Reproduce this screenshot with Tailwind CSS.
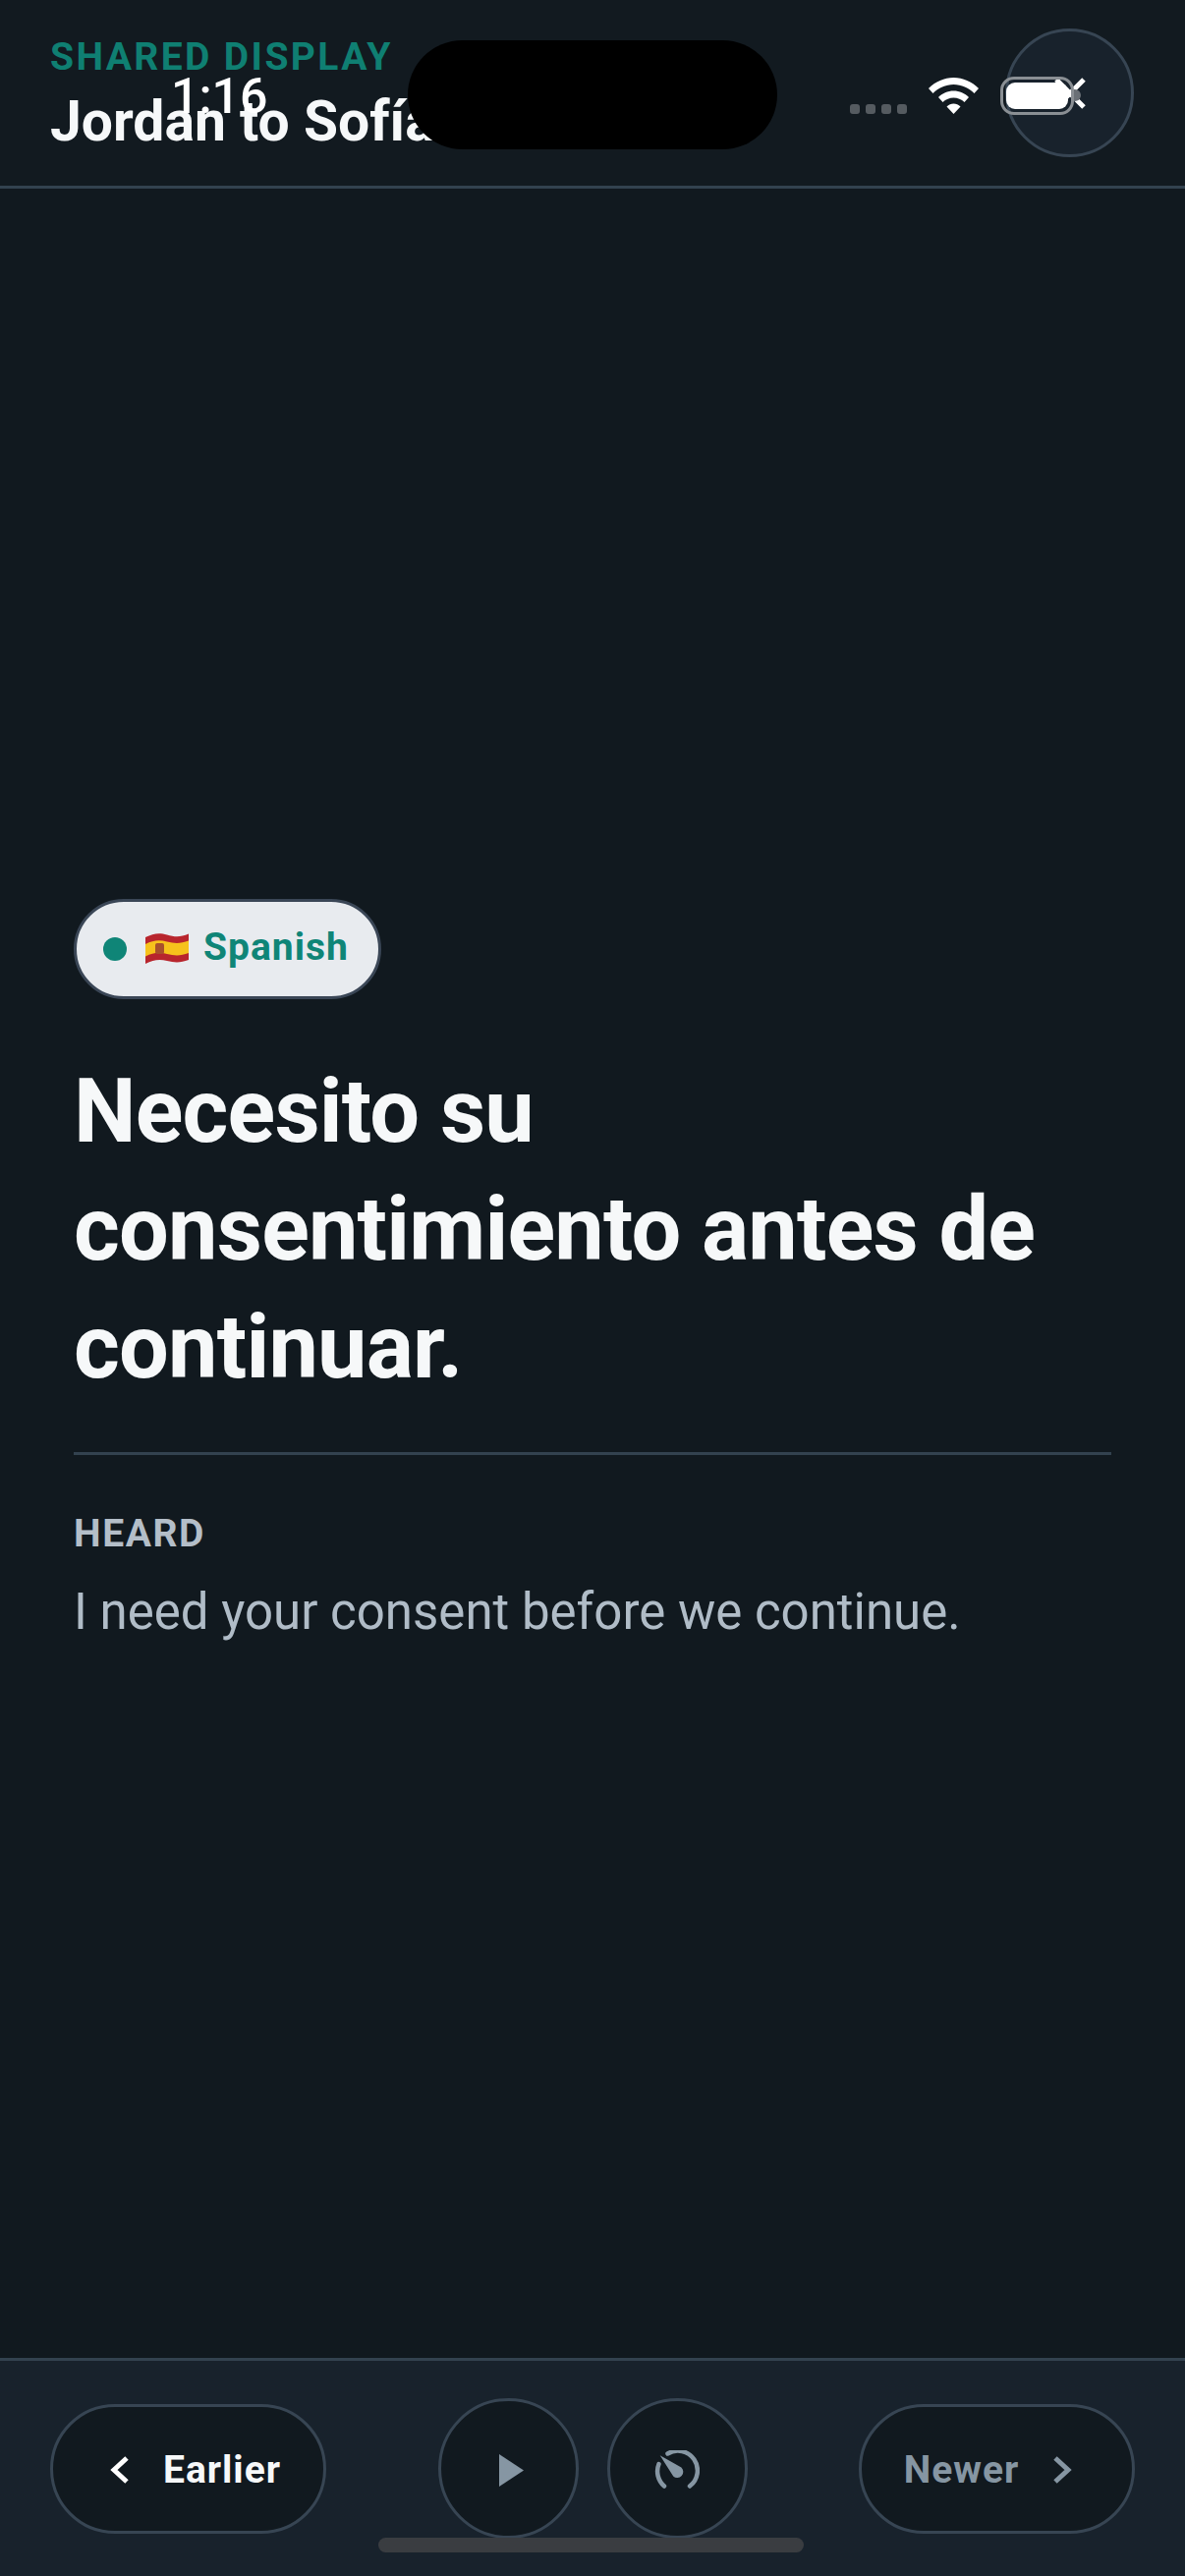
<!DOCTYPE html>
<html lang="en">
<head>
<meta charset="utf-8">
<title>Shared display</title>
<script src="https://cdn.jsdelivr.net/npm/@tailwindcss/browser@4"></script>
</head>
<body class="m-0 bg-[#11191f]">
<div class="relative w-[1206px] h-[2622px] overflow-hidden flex flex-col bg-[#11191f] font-[Roboto,sans-serif]">

  <!-- Header -->
  <header class="h-[192px] shrink-0 border-b-[3px] border-[#33424f] bg-[#121a20] pl-[51px] pr-[52px] flex items-start justify-between">
    <div class="pt-[33px]">
      <p class="text-[39px] leading-[50px] font-bold tracking-[2.4px] text-[#0f7f72]">SHARED DISPLAY</p>
      <h1 class="mt-[5px] text-[57px] leading-[72px] font-bold text-[#f6f8f9]">Jordan to Sofía</h1>
    </div>
    <button class="mt-[29px] w-[131px] h-[131px] rounded-full border-[3px] border-[#374553] bg-[#18222c] flex items-center justify-center">
      <svg class="w-[32px] h-[32px]" viewBox="0 0 32 32" fill="none" stroke="#ffffff" stroke-width="5"><path d="M2 2 30 30M30 2 2 30"/></svg>
    </button>
  </header>

  <!-- Main -->
  <main class="flex-1 flex flex-col justify-center px-[75px] pb-[2px]">
    <div class="self-start h-[102px] rounded-full border-[3px] border-[#3a4656] bg-[#e8ebef] pl-[27px] pr-[30px] flex items-center">
      <span class="w-[24px] h-[24px] rounded-full bg-[#0f8577]"></span>
      <svg class="ml-[19px] w-[44px] h-[34px]" viewBox="0 0 44 34">
        <path d="M0 5C8 1 14 0 22 2.500 30 5 36 5 44 1.500V28C36 31 30 31 22 29 14 27 8 28 0 32Z" fill="#b8252d"/>
        <path d="M0 12C8 8 14 7.500 22 9.500 30 11.500 36 11.500 44 8.500V21C36 24 30 24 22 22 14 20 8 20.500 0 24.500Z" fill="#f6c21c"/>
        <rect x="10" y="11" width="9" height="11" rx="2" fill="#a8502c"/>
      </svg>
      <span class="ml-[15px] -mt-[4px] text-[39px] leading-[50px] font-bold tracking-[1px] text-[#0f8577]">Spanish</span>
    </div>
    <h2 class="mt-[55px] text-[90px] leading-[120px] font-bold tracking-[-0.8px] text-[#f6f8f9]">Necesito su consentimiento antes de continuar.</h2>
    <div class="mt-[46px] border-t-[3px] border-[#33424f] pt-[55px]">
      <p class="text-[39px] leading-[50px] font-bold tracking-[1.6px] text-[#b4bec8]">HEARD</p>
      <p class="mt-[21px] text-[51px] leading-[68px] text-[#b0bcc7]">I need your consent before we continue.</p>
    </div>
  </main>

  <!-- Footer -->
  <footer class="h-[222px] shrink-0 border-t-[3px] border-[#33424f] bg-[#18222c] px-[51px] flex items-center justify-between">
    <button class="w-[281px] h-[132px] rounded-full border-[3px] border-[#374553] bg-[#11191f] pl-[3px] pt-[3px] flex items-center justify-center gap-[20px]">
      <svg class="w-[46px] h-[28px]" viewBox="0 0 46 28" fill="none" stroke="#ffffff" stroke-width="5"><path d="M29 2 16 14 29 26"/></svg>
      <span class="text-[39px] leading-[50px] font-bold tracking-[1px] text-[#f6f8f9]">Earlier</span>
    </button>
    <div class="flex items-center gap-[29px]">
      <button class="w-[143px] h-[143px] rounded-full border-[3px] border-[#374553] bg-[#11191f] pt-[3px] flex items-center justify-center">
        <svg class="w-[25px] h-[33px] ml-[6px]" viewBox="0 0 25 33" fill="#8696a3"><path d="M0 0 25 16.500 0 33Z"/></svg>
      </button>
      <button class="w-[143px] h-[143px] rounded-full border-[3px] border-[#374553] bg-[#11191f] pt-[4px] flex items-center justify-center">
        <svg class="w-[46px] h-[42px]" viewBox="0 0 46 42" fill="none"><path d="M10 36.500A20 20 0 0 1 4.500 14M13.500 3.500A20 20 0 0 1 36 36.500" stroke="#8696a3" stroke-width="4.500" stroke-linecap="round"/><path d="M5.700 5.300 27.400 17.600A6 6 0 1 1 19.200 26.400Z" fill="#8696a3"/></svg>
      </button>
    </div>
    <button class="w-[281px] h-[132px] rounded-full border-[3px] border-[#374553] bg-[#11191f] pr-[6px] pt-[3px] flex items-center justify-center gap-[20px]">
      <span class="text-[39px] leading-[50px] font-bold tracking-[1px] text-[#8696a3]">Newer</span>
      <svg class="w-[46px] h-[28px]" viewBox="0 0 46 28" fill="none" stroke="#8696a3" stroke-width="5"><path d="M17 2 30 14 17 26"/></svg>
    </button>
  </footer>

  <!-- iOS overlays -->
  <div class="absolute left-[415px] top-[41px] w-[376px] h-[111px] rounded-full bg-black"></div>
  <span class="absolute left-[174px] top-[69px] text-[50px] leading-[58px] font-medium text-white">1:16</span>
  <div class="absolute left-[865px] top-[106px] flex gap-[6px]">
    <span class="w-[10px] h-[10px] rounded-[3px] bg-[#555b60]"></span>
    <span class="w-[10px] h-[10px] rounded-[3px] bg-[#555b60]"></span>
    <span class="w-[10px] h-[10px] rounded-[3px] bg-[#555b60]"></span>
    <span class="w-[10px] h-[10px] rounded-[3px] bg-[#555b60]"></span>
  </div>
  <svg class="absolute left-[945px] top-[79px] w-[51px] h-[37px]" viewBox="0 0 51 37" fill="#ffffff">
    <path d="M25.500 0C35 0 44 4 51 11L46.500 16C41 10.500 33.500 7 25.500 7S10 10.500 4.500 16L0 11C7 4 16 0 25.500 0Z"/>
    <path d="M25.500 13.500C31.500 13.500 37 16 41 20L36.500 25C33.500 22 29.500 20.500 25.500 20.500S17.500 22 14.500 25L10 20C14 16 19.500 13.500 25.500 13.500Z"/>
    <path d="M25.500 26.500C28 26.500 30.500 27.500 32.500 29.500L25.500 37 18.500 29.500C20.500 27.500 23 26.500 25.500 26.500Z"/>
  </svg>
  <div class="absolute left-[1018px] top-[78px] w-[75px] h-[39px] rounded-[14px] border-[3px] border-[#8a8f94] p-[3px]">
    <div class="w-full h-full rounded-[9px] bg-white"></div>
  </div>
  <div class="absolute left-[1093px] top-[91px] w-[7px] h-[12px] rounded-r-full bg-[#6a7076]"></div>
  <div class="absolute left-[385px] top-[2583px] w-[433px] h-[15px] rounded-full bg-[#3a3d41]"></div>
</div>
</body>
</html>
